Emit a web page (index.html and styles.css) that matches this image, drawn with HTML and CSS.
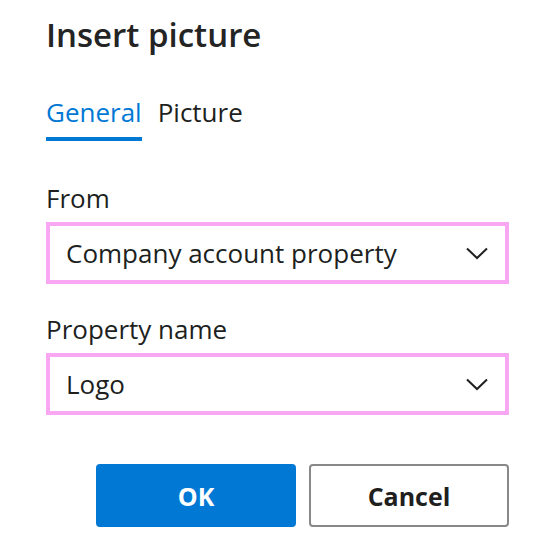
FILE: index.html
```html
<!DOCTYPE html>
<html lang="en">
<head>
    <meta charset="UTF-8">
    <meta name="viewport" content="width=device-width, initial-scale=1.0">
    <title>Insert picture</title>
    <link rel="stylesheet" href="styles.css">
</head>
<body>

<div class="dialog">
    <h1>Insert picture</h1>

    <div class="tabs">
        <button class="tab active">General</button>
        <button class="tab">Picture</button>
    </div>

    <div class="field first">
        <label>From</label>
        <div class="select">
            <span>Company account property</span>
            <svg class="chevron" width="22" height="13" viewBox="0 0 22 13">
                <path d="M1 1.5 L11 11 L21 1.5" fill="none" stroke="#201f1e" stroke-width="2"/>
            </svg>
        </div>
    </div>

    <div class="field">
        <label>Property name</label>
        <div class="select">
            <span>Logo</span>
            <svg class="chevron" width="22" height="13" viewBox="0 0 22 13">
                <path d="M1 1.5 L11 11 L21 1.5" fill="none" stroke="#201f1e" stroke-width="2"/>
            </svg>
        </div>
    </div>

    <div class="actions">
        <button class="btn primary">OK</button>
        <button class="btn">Cancel</button>
    </div>
</div>

</body>
</html>
```

FILE: styles.css
```css
body {
    font-family: 'Open Sans', 'Noto Sans', sans-serif;
    background-color: white;
    color: #201f1e;
    margin: 0;
    padding: 0;
}

.dialog {
    width: 463px;
    padding: 12px 0 0 46px;
    display: flex;
    flex-direction: column;
}

h1 {
    font-size: 33px;
    font-weight: 600;
    margin: 0;
    line-height: 46px;
    color: #242424;
}

.tabs {
    display: flex;
    gap: 16px;
    margin-top: 38px;
}

.tab {
    font-family: inherit;
    font-size: 26px;
    color: #201f1e;
    background: none;
    border: none;
    padding: 0 0 9px 0;
    line-height: 32px;
    border-bottom: 4px solid transparent;
    cursor: pointer;
}

.tab.active {
    color: #0078d4;
    border-bottom-color: #0078d4;
}

.field {
    display: flex;
    flex-direction: column;
    margin-top: 28px;
}

.field.first {
    margin-top: 40px;
}

label {
    font-size: 26px;
    line-height: 34px;
    margin-bottom: 7px;
}

.select {
    height: 62px;
    box-sizing: border-box;
    border: 4px solid #f9a6f3;
    display: flex;
    align-items: center;
    justify-content: space-between;
    padding: 0 17px 0 16px;
    font-size: 26px;
    line-height: 34px;
}

.select span {
    padding-bottom: 1px;
}

.actions {
    display: flex;
    justify-content: flex-end;
    gap: 13px;
    margin-top: 49px;
}

.btn {
    width: 200px;
    height: 63px;
    font-family: inherit;
    font-size: 25px;
    font-weight: 700;
    border-radius: 4px;
    border: 2px solid #8a8886;
    background-color: white;
    color: #201f1e;
    cursor: pointer;
}

.btn.primary {
    background-color: #0078d4;
    border-color: #0078d4;
    color: white;
}
```
